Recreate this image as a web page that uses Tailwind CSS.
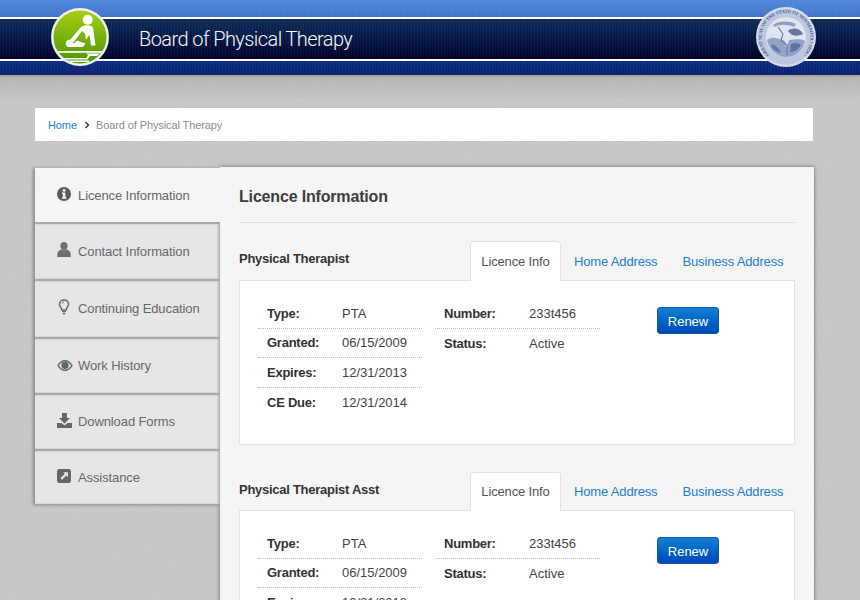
<!DOCTYPE html>
<html>
<head>
<meta charset="utf-8">
<script src="https://cdn.jsdelivr.net/npm/@tailwindcss/browser@4"></script>
</head>
<body class="h-[600px] overflow-hidden bg-[#c9c9c9] font-['Liberation_Sans',Arial,sans-serif] text-[13px] text-[#555]">
<div class="relative h-[600px] overflow-hidden">
  <svg class="absolute inset-0 w-full h-full opacity-[0.3]" aria-hidden="true"><filter id="n"><feTurbulence type="fractalNoise" baseFrequency="0.8" numOctaves="2"/><feColorMatrix type="matrix" values="0 0 0 0 0.35  0 0 0 0 0.35  0 0 0 0 0.35  1.2 0 0 0 -0.45"/></filter><rect width="100%" height="100%" filter="url(#n)"/></svg>
  <div class="absolute left-0 right-0 top-[77px] h-[24px] bg-gradient-to-b from-[rgba(0,0,0,0.09)] to-transparent"></div>

  <header class="relative h-[77px] flex flex-col">
    <div class="h-[17px] bg-gradient-to-b from-[#5488dc] to-[#3f73c9]"></div>
    <div class="h-[2px] bg-white"></div>
    <div class="h-[40px] bg-gradient-to-b from-[#0f2c58] via-[#061845] to-[#03022b] flex items-center pl-[139px]">
      <span class="font-['Roboto',sans-serif] font-light text-[20px] text-[#f7f7f7] tracking-[-0.58px]">Board of Physical Therapy</span>
    </div>
    <div class="h-[2px] bg-white"></div>
    <div class="h-[14px] bg-gradient-to-b from-[#0b2f86] to-[#0a1f6e]"></div>
    <div class="h-[2px] bg-[#a5a5a8]"></div>
    <div class="absolute left-0 right-0 top-0 h-[75px] bg-[repeating-linear-gradient(90deg,rgba(255,255,255,0.035)_0_1px,transparent_1px_3px)]"></div>

    <svg class="absolute left-[50px] top-[7px] w-[60px] h-[60px]" viewBox="0 0 60 60">
      <defs><linearGradient id="g" x1="0" y1="0" x2="0" y2="1"><stop offset="0" stop-color="#a6cf12"/><stop offset="1" stop-color="#4a9606"/></linearGradient><clipPath id="cc"><circle cx="30" cy="30" r="26.500"/></clipPath></defs>
      <circle cx="30" cy="30" r="29" fill="#eef2ea"/>
      <circle cx="30" cy="30" r="26.500" fill="url(#g)"/>
      <g fill="#fff" clip-path="url(#cc)">
        <circle cx="37.700" cy="12.700" r="5"/>
        <path d="M31 20C35 17.500 41 17.500 43 20.500L45.500 38.500H41L39.500 28L36 32.500L35 26.500L32 24L23.500 35.500L19.500 33.500Z"/>
        <path d="M19 32.500C15 33.500 14.500 39 18.500 40H33L35.500 36.500L27 33.500L24 36.500Z"/>
        <rect x="8" y="44" width="44" height="1.800"/>
        <path d="M36 46.500L50 46.500L47 49H40L37.500 52.500H14V51H36.500L38 48Z"/>
        <rect x="17" y="53.500" width="22" height="1.500"/>
      </g>
    </svg>

    <svg class="absolute left-[756px] top-[7px] w-[60px] h-[60px]" viewBox="0 0 60 60">
      <defs>
        <path id="ring" d="M13 48A24.500 24.500 0 1 1 47 48A24.500 24.500 0 0 1 14 49"/>
      </defs>
      <circle cx="30" cy="30" r="30" fill="#d5ddec"/>
      <circle cx="30" cy="30" r="28" fill="#bcc8df"/>
      <text font-size="4.600" font-weight="700" fill="#46598a" font-family="Liberation Serif, serif"><textPath href="#ring">GREAT SEAL OF THE STATE OF MINNESOTA • 1858 •</textPath></text>
      <g class="blur-[0.5px]">
        <circle cx="30" cy="30" r="20" fill="#dfe5f1"/>
        <path d="M17 18C22 14 32 13 40 17L38 20C31 17 23 17 19 20Z" fill="#8f9fc3"/>
        <path d="M32 24C36 20 44 21 47 27C41 30 35 29 32 24Z" fill="#6577a5"/>
        <path d="M11 33C18 28 24 33 29 34L30 42L33 33C38 33 44 31 49 34C47 44 39 50 30 50S13 43 11 33Z" fill="#93a3c7"/>
        <path d="M22 20L27 27L25 33L31 38L31 48" fill="none" stroke="#6475a3" stroke-width="1.100"/>
        <path d="M35 37C39 35 43 36 45 38C42 43 38 45 34 45Z" fill="#6072a2"/>
        <path d="M15 38C19 37 23 41 25 46C20 45 16 42 15 38Z" fill="#6577a6"/>
      </g>
    </svg>
  </header>

  <main class="relative px-[35px]">
    <nav class="mt-[31px] mr-[12px] h-[33px] bg-white flex items-center pl-[13px] pt-[2px] text-[11px] tracking-[-0.1px] text-[#8d8d8d]">
      <a class="text-[#1a80d0]">Home</a>
      <svg class="w-[6px] h-[8px] ml-[7px] mr-[6px] mt-[-1px]" viewBox="0 0 6 8"><path d="M1.500 1L4.500 4L1.500 7" fill="none" stroke="#2b2440" stroke-width="1.300"/></svg>
      <span>Board of Physical Therapy</span>
    </nav>

    <div class="mt-[26px] flex items-start">
      <aside class="relative z-10 w-[185px] flex flex-col shadow-[-2px_1px_3px_rgba(0,0,0,0.3)] text-[#666] tracking-[-0.1px]">
        <a class="h-[55px] bg-[#f5f5f5] flex items-center pl-[22px] gap-[7px] border-t border-[#b5b5b5]">
          <svg class="w-[14px] h-[14px] mt-[-3px] shrink-0" viewBox="0 0 14 14"><circle cx="7" cy="7" r="7" fill="#5a5a5a"/><rect x="5.800" y="2.200" width="2.600" height="2.400" fill="#f5f5f5"/><path d="M4.900 5.600H8.400V10.300H9.400V11.800H4.900V10.300H5.900V7.100H4.900Z" fill="#f5f5f5"/></svg>
          <span class="pt-[2px]">Licence Information</span>
        </a>
        <a class="h-[57px] bg-[#e6e6e6] flex items-center pl-[22px] gap-[7px] border-t-[2px] border-[#a9a9a9] shadow-[inset_-2px_0_2px_rgba(0,0,0,0.22)]">
          <svg class="w-[14px] h-[15px] mt-[-4px] shrink-0" viewBox="0 0 14 15"><ellipse cx="7" cy="4" rx="3.600" ry="4" fill="#6e6e6e"/><path d="M0.300 15V12C0.300 9.500 2.500 8 4.500 7.600C6 8.600 8 8.600 9.500 7.600C11.500 8 13.700 9.500 13.700 12V15Z" fill="#6e6e6e"/></svg>
          <span>Contact Information</span>
        </a>
        <a class="h-[58px] bg-[#e6e6e6] flex items-center pl-[22px] gap-[7px] border-t-[2px] border-[#a9a9a9] shadow-[inset_-2px_0_2px_rgba(0,0,0,0.22)]">
          <svg class="w-[14px] h-[16px] mt-[-5px] shrink-0" viewBox="0 0 14 16"><path d="M7 1C4.200 1 2.500 3 2.500 5.200C2.500 7.600 4.400 8.400 4.800 11H9.200C9.600 8.400 11.500 7.600 11.500 5.200C11.500 3 9.800 1 7 1Z" fill="none" stroke="#6a6a6a" stroke-width="1.500"/><path d="M5 12H9V13.200H5ZM5.500 14H8.500L7.800 15.500H6.200Z" fill="#6a6a6a"/><path d="M5 4.500C5.300 3.500 6 3 7 3" fill="none" stroke="#6a6a6a"/></svg>
          <span>Continuing Education</span>
        </a>
        <a class="h-[56px] bg-[#e6e6e6] flex items-center pl-[22px] gap-[5px] border-t-[2px] border-[#a9a9a9] shadow-[inset_-2px_0_2px_rgba(0,0,0,0.22)]">
          <svg class="w-[16px] h-[11px] mt-[-2px] shrink-0" viewBox="0 0 16 11"><path d="M0.200 5.500C2 2 5 0 8 0S14 2 15.800 5.500C14 9 11 11 8 11S2 9 0.200 5.500ZM1.800 5.500C3.200 7.800 5.500 9.600 8 9.600S12.800 7.800 14.200 5.500C12.800 3.200 10.500 1.400 8 1.400S3.200 3.200 1.800 5.500Z" fill="#666"/><circle cx="8" cy="5.300" r="3.600" fill="#666"/></svg>
          <span>Work History</span>
        </a>
        <a class="h-[56px] bg-[#e6e6e6] flex items-center pl-[22px] gap-[6px] border-t-[2px] border-[#a9a9a9] shadow-[inset_-2px_0_2px_rgba(0,0,0,0.22)]">
          <svg class="w-[15px] h-[15px] mt-[-4px] shrink-0" viewBox="0 0 15 15"><path d="M5 0H10V5H13L7.500 10.500L2 5H5Z" fill="#666"/><path d="M0 10H4.500L7.500 12.500L10.500 10H15V15H0Z" fill="#666"/></svg>
          <span>Download Forms</span>
        </a>
        <a class="h-[55px] bg-[#e6e6e6] flex items-center pl-[22px] gap-[7px] border-t-[2px] border-[#a9a9a9] shadow-[inset_-2px_0_2px_rgba(0,0,0,0.22)]">
          <svg class="w-[14px] h-[14px] mt-[-3px] shrink-0" viewBox="0 0 14 14"><rect width="14" height="14" rx="2" fill="#666"/><path d="M3.500 9L7.800 4.700L6 3.200H11V8.200L9.400 6.500L5 10.800Z" fill="#e6e6e6"/></svg>
          <span>Assistance</span>
        </a>
      </aside>

      <section class="w-[594px] h-[500px] bg-[#f5f5f5] shadow-[0_0_4px_rgba(0,0,0,0.5)] px-[19px] pt-[20px]">
        <h1 class="h-[36px] border-b border-[#dcdcdc] text-[16px] tracking-[-0.17px] leading-[20px] font-bold text-[#3c3c3c]">Licence Information</h1>

        <div class="mt-[18px] h-[39px] flex items-start relative z-10 tracking-[-0.15px]">
          <h2 class="w-[231px] mt-[10px] font-bold text-[#333] leading-[15px] tracking-[-0.27px]">Physical Therapist</h2>
          <a class="h-[40px] w-[91px] bg-white border border-b-0 border-[#e2e2e2] rounded-t-[4px] flex items-center justify-center text-[#555]">Licence Info</a>
          <a class="h-[39px] pt-[2px] ml-[13px] flex items-center text-[#1a80d0]">Home Address</a>
          <a class="h-[39px] pt-[2px] ml-[25px] flex items-center text-[#1a80d0]">Business Address</a>
        </div>
        <div class="h-[165px] bg-white border border-[#e2e2e2] pl-[18px] pt-[18px] flex items-start">
          <dl class="w-[164px]">
            <div class="h-[29.500px] flex items-center border-b border-dotted border-[#bbb]"><dt class="w-[84px] pl-[9px] font-bold text-[#333] tracking-[-0.25px]">Type:</dt><dd class="text-[#444]">PTA</dd></div>
            <div class="h-[29.500px] flex items-center border-b border-dotted border-[#bbb]"><dt class="w-[84px] pl-[9px] font-bold text-[#333] tracking-[-0.25px]">Granted:</dt><dd class="text-[#444]">06/15/2009</dd></div>
            <div class="h-[29.500px] flex items-center border-b border-dotted border-[#bbb]"><dt class="w-[84px] pl-[9px] font-bold text-[#333] tracking-[-0.25px]">Expires:</dt><dd class="text-[#444]">12/31/2013</dd></div>
            <div class="h-[29.500px] flex items-center"><dt class="w-[84px] pl-[9px] font-bold text-[#333] tracking-[-0.25px]">CE Due:</dt><dd class="text-[#444]">12/31/2014</dd></div>
          </dl>
          <dl class="w-[165px] ml-[13px]">
            <div class="h-[29.500px] flex items-center border-b border-dotted border-[#bbb]"><dt class="w-[94px] pl-[9px] font-bold text-[#333] tracking-[-0.25px]">Number:</dt><dd class="text-[#444]">233t456</dd></div>
            <div class="h-[29.500px] flex items-center"><dt class="w-[94px] pl-[9px] font-bold text-[#333] tracking-[-0.25px]">Status:</dt><dd class="text-[#444]">Active</dd></div>
          </dl>
          <button class="ml-[57px] mt-[8px] pt-[3px] w-[62px] h-[27px] rounded-[3px] bg-gradient-to-b from-[#1580d0] to-[#0047bb] border border-[#0a5ab0] text-white text-[13px]">Renew</button>
        </div>

        <div class="mt-[27px] h-[38px] flex items-start relative z-10 tracking-[-0.15px]">
          <h2 class="w-[231px] mt-[10px] font-bold text-[#333] leading-[15px] tracking-[-0.27px]">Physical Therapist Asst</h2>
          <a class="h-[39px] w-[91px] bg-white border border-b-0 border-[#e2e2e2] rounded-t-[4px] flex items-center justify-center text-[#555]">Licence Info</a>
          <a class="h-[38px] pt-[2px] ml-[13px] flex items-center text-[#1a80d0]">Home Address</a>
          <a class="h-[38px] pt-[2px] ml-[25px] flex items-center text-[#1a80d0]">Business Address</a>
        </div>
        <div class="h-[165px] bg-white border border-[#e2e2e2] pl-[18px] pt-[18px] flex items-start">
          <dl class="w-[164px]">
            <div class="h-[29.500px] flex items-center border-b border-dotted border-[#bbb]"><dt class="w-[84px] pl-[9px] font-bold text-[#333] tracking-[-0.25px]">Type:</dt><dd class="text-[#444]">PTA</dd></div>
            <div class="h-[29.500px] flex items-center border-b border-dotted border-[#bbb]"><dt class="w-[84px] pl-[9px] font-bold text-[#333] tracking-[-0.25px]">Granted:</dt><dd class="text-[#444]">06/15/2009</dd></div>
            <div class="h-[29.500px] flex items-center border-b border-dotted border-[#bbb]"><dt class="w-[84px] pl-[9px] font-bold text-[#333] tracking-[-0.25px]">Expires:</dt><dd class="text-[#444]">12/31/2013</dd></div>
          </dl>
          <dl class="w-[165px] ml-[13px]">
            <div class="h-[29.500px] flex items-center border-b border-dotted border-[#bbb]"><dt class="w-[94px] pl-[9px] font-bold text-[#333] tracking-[-0.25px]">Number:</dt><dd class="text-[#444]">233t456</dd></div>
            <div class="h-[29.500px] flex items-center"><dt class="w-[94px] pl-[9px] font-bold text-[#333] tracking-[-0.25px]">Status:</dt><dd class="text-[#444]">Active</dd></div>
          </dl>
          <button class="ml-[57px] mt-[8px] pt-[3px] w-[62px] h-[27px] rounded-[3px] bg-gradient-to-b from-[#1580d0] to-[#0047bb] border border-[#0a5ab0] text-white text-[13px]">Renew</button>
        </div>
      </section>
    </div>
  </main>
</div>
</body>
</html>
